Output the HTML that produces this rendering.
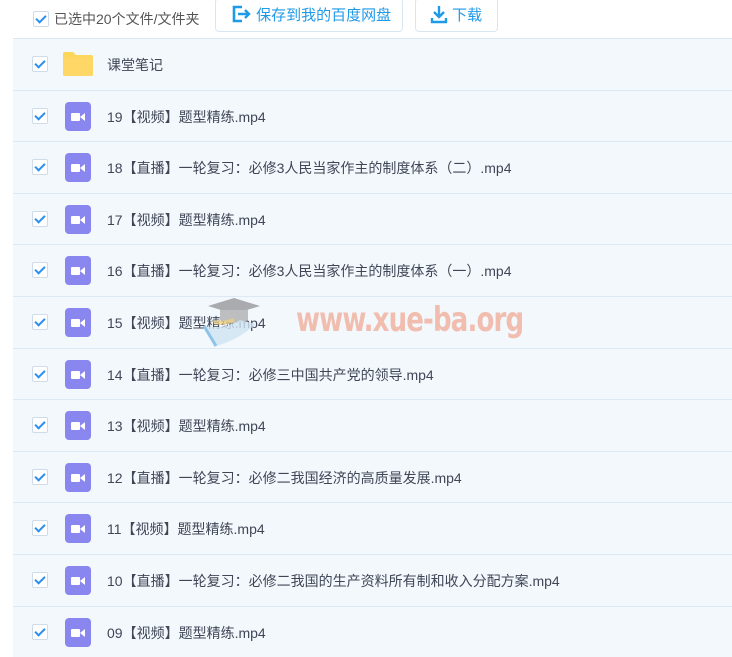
<!DOCTYPE html>
<html><head><meta charset="utf-8"><style>
body{margin:0;width:732px;height:652px;overflow:hidden;background:#fff;font-family:"Liberation Sans","Noto Sans CJK SC",sans-serif;position:relative}
.top{position:absolute;top:0;left:0;width:732px;height:38px}
.cb{position:absolute;width:14px;height:14px;border:1px solid #cfdbe8;border-radius:2px;background:#fff}
.cb:after{content:"";position:absolute;left:4px;top:1px;width:4px;height:8px;border:solid #2b8ff0;border-width:0 2px 2px 0;transform:rotate(45deg)}
.btn{position:absolute;top:-2px;height:34px;border:1px solid #d8e6f2;border-radius:4px;background:#fff;color:#1f9ae8;font-size:15px;line-height:34px;box-sizing:border-box}
.list{position:absolute;top:38px;left:13px;width:719px}
.row{position:relative;height:51.6px;background:#f3f8fd;border-top:1px solid #dce8f4;box-sizing:border-box}
.row .cb{left:19px;top:17px}
.name{position:absolute;left:94px;top:16px;font-size:14px;color:#404656;white-space:nowrap}
.vid{position:absolute;left:52px;top:11px;width:26px;height:29px;background:#8a86f0;border-radius:4px}
.vid:before{content:"";position:absolute;left:6px;top:11px;width:9px;height:8px;background:#fff;border-radius:1px}
.vid:after{content:"";position:absolute;left:15px;top:11px;border:4px solid transparent;border-right:5px solid #fff;border-left:0}
.fold{position:absolute;left:50px;top:13px;width:30px;height:24px}
.wm{position:absolute;left:296px;top:300px;font-family:"DejaVu Sans Condensed","Liberation Sans Narrow",sans-serif;font-weight:bold;font-size:34px;color:#f1b7a6;letter-spacing:-1px;transform:scaleX(0.85);transform-origin:left;opacity:.9}
</style></head><body>
<div class="top">
<div class="cb" style="left:33px;top:11px"></div>
<div style="position:absolute;left:54px;top:9px;font-size:14px;color:#555">已选中20个文件/文件夹</div>
<div class="btn" style="left:215px;width:188px;padding-left:14px"><svg width="22" height="20" viewBox="0 0 22 20" style="vertical-align:-4px"><path d="M12 3H4v14h8" fill="none" stroke="#1f9ae8" stroke-width="2.6"/><path d="M8 10h11M15 6l4 4-4 4" fill="none" stroke="#1f9ae8" stroke-width="2.4"/></svg> 保存到我的百度网盘</div>
<div class="btn" style="left:415px;width:83px;padding-left:14px"><svg width="18" height="20" viewBox="0 0 18 20" style="vertical-align:-4px"><path d="M9 2v11M4 8l5 5 5-5M2 14v4h14v-4" fill="none" stroke="#1f9ae8" stroke-width="2.4"/></svg> 下载</div>
</div>
<div class="list">
<div class="row"><div class="cb"></div><svg class="fold" viewBox="0 0 30 24"><path d="M0 2q0-2 2-2h8l3 3h15q2 0 2 2v17q0 2-2 2H2q-2 0-2-2z" fill="#fdd75d"/><path d="M0 6h30v16q0 2-2 2H2q-2 0-2-2z" fill="#fed766"/></svg><div class="name">课堂笔记</div></div>
<div class="row"><div class="cb"></div><div class="vid"></div><div class="name">19【视频】题型精练.mp4</div></div>
<div class="row"><div class="cb"></div><div class="vid"></div><div class="name">18【直播】一轮复习：必修3人民当家作主的制度体系（二）.mp4</div></div>
<div class="row"><div class="cb"></div><div class="vid"></div><div class="name">17【视频】题型精练.mp4</div></div>
<div class="row"><div class="cb"></div><div class="vid"></div><div class="name">16【直播】一轮复习：必修3人民当家作主的制度体系（一）.mp4</div></div>
<div class="row"><div class="cb"></div><div class="vid"></div><div class="name">15【视频】题型精练.mp4</div></div>
<div class="row"><div class="cb"></div><div class="vid"></div><div class="name">14【直播】一轮复习：必修三中国共产党的领导.mp4</div></div>
<div class="row"><div class="cb"></div><div class="vid"></div><div class="name">13【视频】题型精练.mp4</div></div>
<div class="row"><div class="cb"></div><div class="vid"></div><div class="name">12【直播】一轮复习：必修二我国经济的高质量发展.mp4</div></div>
<div class="row"><div class="cb"></div><div class="vid"></div><div class="name">11【视频】题型精练.mp4</div></div>
<div class="row"><div class="cb"></div><div class="vid"></div><div class="name">10【直播】一轮复习：必修二我国的生产资料所有制和收入分配方案.mp4</div></div>
<div class="row"><div class="cb"></div><div class="vid"></div><div class="name">09【视频】题型精练.mp4</div></div>
</div>
<svg style="position:absolute;left:200px;top:292px" width="80" height="60" viewBox="0 0 80 60"><path d="M8 14l26-8 26 8-26 8z" fill="#a9abae"/><path d="M20 18v10q14 6 28 0V18" fill="#bcbec0"/><path d="M4 34q20 4 36-6l16 4q-18 16-40 22z" fill="#cfe3f2" opacity=".8"/><path d="M4 34l12 20" stroke="#8fc3e8" stroke-width="3" fill="none"/><path d="M14 30q10 2 20-2" stroke="#f3d27a" stroke-width="4" fill="none" opacity=".7"/></svg>
<div class="wm">www.xue-ba.org</div>
</body></html>
